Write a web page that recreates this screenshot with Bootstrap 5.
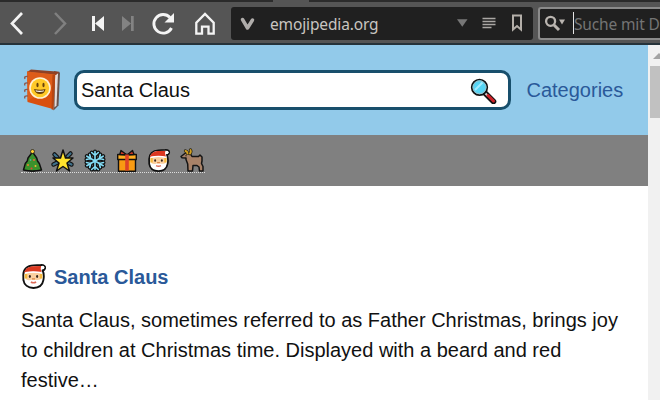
<!DOCTYPE html>
<html lang="en">
<head>
<meta charset="utf-8">
<title>Santa Claus - Emojipedia</title>
<link href="https://cdn.jsdelivr.net/npm/bootstrap@5.3.0/dist/css/bootstrap.min.css" rel="stylesheet">
<style>
body{font-family:"Liberation Sans",Arial,sans-serif;font-size:20px;line-height:30px;color:#111;background:#fff;width:660px;height:400px}
svg{display:block;flex:none}
.tabstrip{height:2px;background:#2b2b2b;padding-left:273px}
.tab-active{width:36px;height:2px;background:#555}
.toolbar{height:43px;background:#555;border-bottom:2px solid #26333a;font-family:"Noto Sans","Open Sans",sans-serif}
.address{width:302px;height:33px;margin:5px 5px 0 6px;background:#202020;border-radius:3px}
.address-text{font-size:15.5px;line-height:35px;color:#c9c5c1;width:181px;letter-spacing:-.14px}
.websearch{width:122px;height:33px;margin-top:5px;background:#202020;border:2px solid #8b8b8b;border-right:0;border-radius:3px 0 0 3px;color:#747474;font-size:15.5px;letter-spacing:-.15px;line-height:31px;white-space:nowrap}
.caret{width:1px;height:22px;margin-top:3px;background:#e4e4e4}
.viewport{height:355px}
.site-head{height:90px;background:#92caea;padding:0 0 0 21px}
.field{width:437px;height:40px;margin:0 15.500px 0 11px;border:3px solid #184f6c;border-radius:10px;padding:0 11px 0 4px;background:#fff;color:#111}
.site-link,.result-title{color:#2a5999}
.site-link:hover{color:#18406f}
.events{height:51px;background:#808080;padding:13px 0 0 21px}
.event-links{width:184px;height:25px;border-bottom:1px dotted #ddd}
.result{padding:78px 20px 0 21px}
.result-title{font-size:20px;font-weight:700}
.scroller{width:12px;background:#f1f1f1}
.thumb{width:10px;height:52px;background:#c1c1c1;margin-left:2px}
</style>
<script src="https://cdn.jsdelivr.net/npm/bootstrap@5.3.0/dist/js/bootstrap.bundle.min.js"></script>
</head>
<body class="overflow-hidden">
<svg width="0" height="0" class="position-absolute" aria-hidden="true">
<symbol id="santa" viewBox="0 0 24 24">
<path d="M2.200 11C2 5 6 1.500 12 1.300l7-.3c3-.2 4.800 1.300 4 3.500-.5 1.300-1.500 1.600-2.300 1.500 1.200 2.500 1.500 6 .8 9.500C20.700 20 17.300 23 12 23S3 20 2.300 15.500Z" fill="#fff" stroke="#101010" stroke-width="1.800" stroke-linejoin="round"/>
<path d="M4.500 9Q12 7.500 19.500 9v5.500Q16 16 14 15h-4Q7 16.500 4.500 14.500Z" fill="#fbd0a0"/>
<path d="M3.500 9.500h2.500v4.500H3.500zM18 9.500h2.500v4.500H18z" fill="#f6b93c"/>
<path d="M3 8.500C4 4 8 2.200 12 2.100l7-.1c.8 0 .5 2-.2 2.500L20 8.500Q11 6.500 3 8.500Z" fill="#dc3820"/>
<path d="M4 8.500Q12 6.900 20 8.500" stroke="#fff" stroke-width="1.500" fill="none"/>
<circle cx="20.800" cy="3.400" r="1.700" fill="#fff"/>
<ellipse cx="8.500" cy="12" rx="1" ry="1.400" fill="#35251c"/><ellipse cx="15.500" cy="12" rx="1" ry="1.400" fill="#35251c"/>
<path d="M10.500 14.300h3" stroke="#dc8848" stroke-width="1.300"/><path d="M9.500 17.300q2.500 1.500 5 0" stroke="#dd6a58" stroke-width="1.500" fill="none"/>
</symbol>
</svg>

<div class="tabstrip"><div class="tab-active"></div></div>
<nav class="toolbar d-flex align-items-start">
<svg width="44" height="41" viewBox="0 2 44 41"><path d="M22 13 12 23.500 22 34" fill="none" stroke="#f4f4f4" stroke-width="2.700"/></svg>
<svg width="36" height="41" viewBox="44 2 36 41"><path d="M55 13 65 23.500 55 34" fill="none" stroke="#808080" stroke-width="2.500"/></svg>
<svg width="32" height="41" viewBox="80 2 32 41"><path d="M92 16h3v15h-3zM104 16v15l-9-7.500z" fill="#f4f4f4"/></svg>
<svg width="32" height="41" viewBox="112 2 32 41"><path d="M131 16h2.700v15H131zM122 16v15l9-7.500z" fill="#838383"/></svg>
<svg width="40" height="41" viewBox="144 2 40 41"><path d="M170 17.500A9.300 9.300 0 1 0 171.500 28" fill="none" stroke="#f4f4f4" stroke-width="2.900"/><path d="M174 13v9.500h-9.500z" fill="#f4f4f4"/></svg>
<svg width="41" height="41" viewBox="184 2 41 41"><path d="M196.300 33.700V22.800L205 14l8.700 8.800v10.900h-5.200v-7h-6.500v7z" fill="none" stroke="#f4f4f4" stroke-width="2.300"/></svg>
<div class="address d-flex flex-shrink-0">
<svg width="39" height="33" viewBox="231 7 39 33"><path d="m242.500 19.500 5 8.500 5-8" fill="none" stroke="#b0adab" stroke-width="3.500" stroke-linecap="round" stroke-linejoin="round"/></svg>
<span class="address-text">emojipedia.org</span>
<svg width="82" height="33" viewBox="451 7 82 33"><path d="M457 19.300h10.500l-5.200 7.500z" fill="#777"/><path d="M482.500 18.500h13M482.500 21.500h13M482.500 24.500h13M482.500 27.500h9" stroke="#aaa7a4" stroke-width="1.400"/><path d="M513 15.500h8v14l-4-3.500-4 3.500z" fill="none" stroke="#b4afa9" stroke-width="2"/></svg>
</div>
<div class="websearch d-flex flex-shrink-0">
<svg width="33" height="29" viewBox="540 9 33 29"><circle cx="550.600" cy="21.300" r="4.500" fill="none" stroke="#bab5b0" stroke-width="2.300"/><path d="m554 25 5 5" stroke="#bab5b0" stroke-width="3"/><path d="M559 19.500h6l-3 5z" fill="#bab5b0"/></svg>
<span class="caret"></span><span>Suche mit D</span>
</div>
</nav>

<div class="viewport d-flex">
<main class="flex-grow-1">
<header class="site-head d-flex align-items-center">
<svg width="42" height="46" viewBox="20 67 42 46">
<path d="M53 71l6 1.500-1.500 33-5 5z" fill="#69534d"/><path d="m54 73 3 .5-1.500 32-2 2z" fill="#e6dcda"/>
<path d="m26 72 4-2.500 28.500 2.200L55 75z" fill="#8f4125"/><path d="m26 71.500 28 3-2.200 34.500L26.500 102z" fill="#d9500f"/><path d="m26 71.500 28 3-.7 11L26 101z" fill="#e36a26" opacity=".45"/>
<path d="M51.500 74.500h2.800L52.500 110l-2-.8z" fill="#b84510"/>
<path d="M24 79q-1.500-3 3-2.500M24 85.500q-1.500-3 3-2.500M24 92q-1.500-3 3-2.500M24 98.500q-1.500-3 3-2.500" fill="none" stroke="#8e5b50" stroke-width="1.400"/>
<circle cx="39" cy="88" r="10.800" fill="#fff2d5"/><circle cx="39" cy="88" r="9.200" fill="#ffc928"/>
<ellipse cx="36.500" cy="85" rx="1.100" ry="2.200" fill="#68420b"/><ellipse cx="42.500" cy="85" rx="1.100" ry="2.200" fill="#68420b"/>
<path d="M33 89q6.500 1.500 11.500 0-.7 5-5.500 5t-6-5z" fill="#68420b"/><path d="M34.500 90.200q5 1 8.500 0l-.5 1.300q-4 .8-7.500 0z" fill="#fff"/>
</svg>
<div class="field d-flex flex-shrink-0 align-items-center justify-content-between"><span>Santa Claus</span>
<svg width="28" height="28" viewBox="469 76 28 28"><path d="m485 93 8.500 8.500" stroke="#111" stroke-width="5.600" stroke-linecap="round"/><path d="m485 93 3 3" stroke="#d5d5d5" stroke-width="2"/><path d="m488 95.500 5.500 5.500" stroke="#ce2229" stroke-width="3" stroke-linecap="round"/><circle cx="479.500" cy="87.300" r="7.800" fill="#55d5f5" stroke="#111" stroke-width="1.700"/><circle cx="479.500" cy="87.300" r="6.500" fill="none" stroke="#9bbdc6"/><path d="m475 90 7.500-7.500" stroke="#a4ebff" stroke-width="2"/></svg>
</div>
<a href="#" class="site-link text-decoration-none">Categories</a>
</header>
<div class="events"><div class="event-links">
<svg width="184" height="24" viewBox="21 148 184 24">
<g stroke="#111" stroke-width="1.500" stroke-linejoin="round">
<path d="M30.500 167h4v4h-4z" fill="#865021"/><path d="m32.500 152-4.500 6-.7 3-2 2.500-1.800 6.500q9 2 18 0l-2.200-6.500-1.800-2.500-.8-3z" fill="#3b912d"/><circle cx="32.500" cy="151.500" r="2" fill="#ffcf35" stroke-width=".7"/>
<path d="m54.500 154.500 3 3M70.500 153.500l-3 3M53.500 164.500l4-2M71.500 164.500l-4-2" stroke-width="4.500" stroke-linecap="round"/><path d="m54.500 154.500 3 3M70.500 153.500l-3 3M53.500 164.500l4-2M71.500 164.500l-4-2" stroke="#3f718b" stroke-width="2.200" stroke-linecap="round"/>
<path d="m63 150 2.500 8H73l-6 5 2.500 8-6.500-4.500-6.500 4.500 2.500-8-6-5h7.500z" fill="#ffe22d"/>
</g>
<g fill="none" stroke-linecap="round"><path d="M95 151.500v18M86.800 156.200l16.400 9.500M86.800 165.700l16.400-9.500M91.700 152.500l3.300 3 3.300-3M91.700 169.500l3.300-3 3.300 3M86.500 159.500l4.200-1-1-4M103.500 162.500l-4.200 1 1 4M86.500 162.500l4.200 1-1 4M103.500 159.500l-4.200-1 1-4" stroke="#111" stroke-width="4"/><path d="M95 151.500v18M86.800 156.200l16.400 9.500M86.800 165.700l16.400-9.500M91.700 152.500l3.300 3 3.300-3M91.700 169.500l3.300-3 3.300 3M86.500 159.500l4.200-1-1-4M103.500 162.500l-4.200 1 1 4M86.500 162.500l4.200 1-1 4M103.500 159.500l-4.200-1 1-4" stroke="#83dcf5" stroke-width="1.600"/></g>
<g stroke="#111" stroke-width="1.400" stroke-linejoin="round"><path d="M118.500 159h17v12.200h-17z" fill="#f99b12"/><path d="M117.700 154.500h18.600v5h-18.600z" fill="#ffad20"/><path d="m127 155-6-4.500-1.200 4zM127 155l5.500-4.500 1.500 4z" fill="#c93722"/></g><path d="M125.200 154.500h3.600v16h-3.600z" fill="#dd4328"/>
<g><circle cx="28" cy="165" r="1" fill="#ed7d31"/><circle cx="34" cy="160" r="1" fill="#ed6735"/><circle cx="35.500" cy="166" r="1" fill="#efbd31"/><circle cx="30.500" cy="160" r=".8" fill="#59b4d5"/><circle cx="31.500" cy="168.500" r="1" fill="#e94535"/></g>
<use href="#santa" x="146.500" y="149" width="24" height="23"/>
<path d="m181 156.500 4.500-3.500h4.500l2 3.500h6.500l1.500-1.500 2 2v4l-.5 2.500 1.500 3v4.500h-3.500l-.5-4-2-1.500h-4l-.5 5.500h-4.500l-.3-7-1.700-4.500v-1.500l-4-.2z" fill="#a88268" stroke="#151515" stroke-width="1.500" stroke-linejoin="round"/><path d="M187.500 153.500q0-2-2-2.500M190 153.500q1.500-1.500.5-3.500" fill="none" stroke="#252012" stroke-width="3.200" stroke-linecap="round"/><path d="M187.500 153.500q0-2-2-2.500M190 153.500q1.500-1.500.5-3.500" fill="none" stroke="#d2a020" stroke-width="1.900" stroke-linecap="round"/><circle cx="186" cy="155.700" r=".7" fill="#222"/>
</svg>
</div></div>
<article class="result">
<h2 class="result-title d-flex align-items-center mb-0"><svg class="me-2" width="25" height="25" viewBox="0 0 24 24"><use href="#santa" width="24" height="24"/></svg><span>Santa Claus</span></h2>
<p class="mb-0 mt-3">Santa Claus, sometimes referred to as Father Christmas, brings joy to children at Christmas time. Displayed with a beard and red festive…</p>
</article>
</main>
<aside class="scroller flex-shrink-0"><svg width="12" height="21" viewBox="648 45 12 21"><path d="m653 59 6-6 6 6z" fill="#a3a3a3"/></svg><div class="thumb"></div></aside>
</div>
</body>
</html>
